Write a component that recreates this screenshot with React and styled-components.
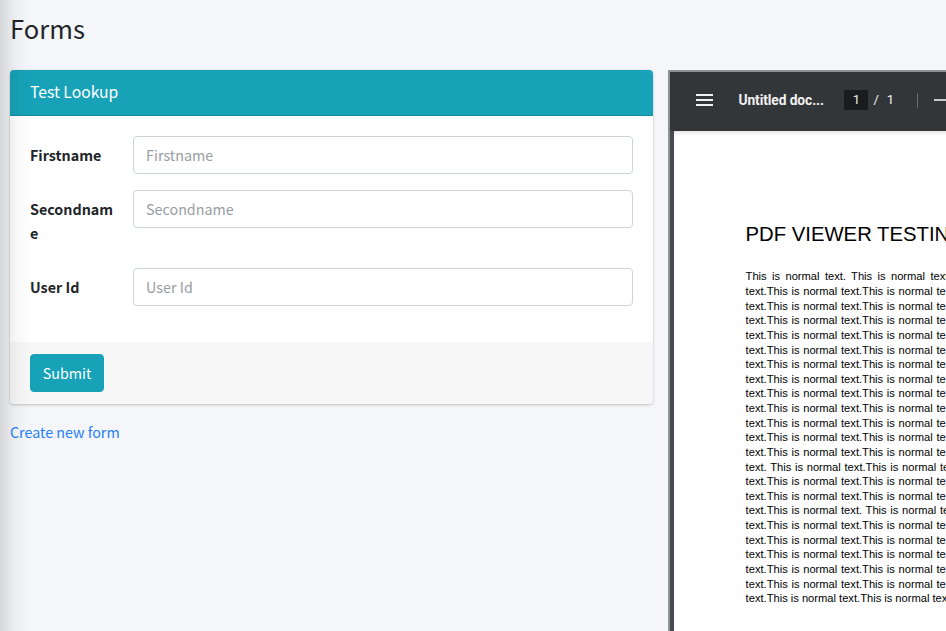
import React from "react";
import styled, { createGlobalStyle } from "styled-components";

const GlobalStyle = createGlobalStyle`
  *, *::before, *::after { box-sizing: border-box; }
  html, body { margin: 0; height: 100%; overflow: hidden; }
  body {
    background: #f4f6f9;
    color: #212529;
    font-family: "Source Sans Pro", "Noto Sans CJK SC", sans-serif;
    font-size: 14.3px;
    line-height: 24px;
  }
`;

const Page = styled.div`
  position: relative;
  width: 946px;
  height: 631px;
  overflow: hidden;
  padding: 0 0 0 10px;
`;

const SidebarShadow = styled.div`
  position: absolute;
  z-index: 5;
  top: -60px;
  bottom: -60px;
  left: -250px;
  width: 250px;
  pointer-events: none;
  box-shadow: 0 14px 28px rgba(0, 0, 0, 0.25);
`;

const PageTitle = styled.h1`
  margin: 0;
  height: 70px;
  padding-top: 11px;
  font-size: 25.6px;
  line-height: 34px;
  font-weight: 400;
`;

const Columns = styled.div`
  display: flex;
  align-items: flex-start;
  gap: 15px;
`;

const FormColumn = styled.div`
  flex: 0 0 643.3px;
`;

const Card = styled.form`
  margin: 0 0 16px;
  border-radius: 4px;
  background: #fff;
  overflow: hidden;
  box-shadow: 0 0 1px rgba(0, 0, 0, 0.125), 0 1px 3px rgba(0, 0, 0, 0.2);
`;

const CardHeader = styled.div`
  height: 46px;
  padding: 11px 20px;
  background: #17a2b8;
  border-bottom: 1px solid #148ea1;
  color: #fff;
  font-size: 15.7px;
  line-height: 21px;
`;

const CardBody = styled.div`
  padding: 20px 20px 4px;
  height: 226px;
`;

const FormRow = styled.div`
  display: flex;
  align-items: flex-start;
  margin-bottom: 16px;
`;

const Label = styled.label`
  flex: 0 0 103.1px;
  padding: 7px 18px 7px 0;
  font-weight: 700;
  overflow-wrap: anywhere;
`;

const Input = styled.input`
  flex: 1;
  min-width: 0;
  height: 38px;
  padding: 5px 12px 7px;
  border: 1px solid #ced4da;
  border-radius: 4px;
  background: #fff;
  font: inherit;
  color: #495057;
  outline: 0;
  &::placeholder { color: #979da2; opacity: 1; }
`;

const CardFooter = styled.div`
  height: 62px;
  padding: 12px 20px;
  background: #f7f7f7;
`;

const SubmitButton = styled.button`
  display: block;
  width: 74px;
  height: 38px;
  padding: 0;
  border: 1px solid #17a2b8;
  border-radius: 4px;
  background: #17a2b8;
  color: #fff;
  font: inherit;
`;

const Link = styled.a`
  display: inline-block;
  color: #2680fb;
  text-decoration: none;
`;

const Viewer = styled.div`
  flex: 0 0 400px;
  height: 600px;
  border: 2px solid;
  border-color: #8f9295 #eee #eee #8f9295;
  background: #474b4f;
  overflow: hidden;
`;

const Toolbar = styled.div`
  display: flex;
  align-items: center;
  height: 59px;
  padding: 0 0 3px 25.7px;
  background: #323639;
  color: #f1f1f1;
  font: 14px/20px Roboto, sans-serif;
`;

const MenuIcon = styled.svg`
  display: block;
  width: 18px;
  height: 14px;
  margin-right: 24.5px;
`;

const DocTitle = styled.span`
  width: 106px;
  font-size: 13.8px;
  font-weight: 700;
  letter-spacing: -0.1px;
`;

const PageField = styled.span`
  width: 24px;
  height: 20px;
  margin-right: 5px;
  background: #191b1c;
  font-size: 13px;
  text-align: center;
`;

const PageCount = styled.span`
  display: flex;
  gap: 8px;
  width: 44px;
  font-size: 13px;
`;

const Divider = styled.span`
  width: 1px;
  height: 15px;
  margin-right: 16px;
  background: #686b6e;
`;

const MinusBar = styled.span`
  width: 16px;
  height: 2px;
  background: #c8c9ca;
`;

const Sheet = styled.div`
  height: 560px;
  margin-left: 4px;
  padding: 88px 0 0 71.3px;
  background: #fff;
  box-shadow: inset 0 4px 4px -2px rgba(0, 0, 0, 0.12);
  color: #000;
  font-family: "Liberation Sans", Arial, sans-serif;
`;

const DocHeading = styled.h2`
  margin: 0 0 20.4px;
  height: 30px;
  font-size: 20.3px;
  line-height: 30px;
  font-weight: 400;
  white-space: nowrap;
`;

const Line = styled.div`
  height: 14.64px;
  font-size: 11.17px;
  line-height: 14.64px;
  white-space: nowrap;
  word-spacing: ${(p) => p.$space}px;
`;

const usual = {
  text: "text.This is normal text.This is normal text.This is normal",
  space: 0.6,
};

const lines = [
  { text: "This is normal text. This is normal text.", space: 2.25 },
  ...Array(12).fill(usual),
  { text: "text. This is normal text.This is normal text.This is", space: 0.6 },
  ...Array(2).fill(usual),
  { text: "text.This is normal text. This is normal text.This is", space: 0.6 },
  ...Array(5).fill(usual),
  { text: usual.text, space: -0.05 },
];

const fields = ["Firstname", "Secondname", "User Id"];

export default function App() {
  return (
    <Page>
      <GlobalStyle />
      <SidebarShadow />
      <PageTitle>Forms</PageTitle>
      <Columns>
        <FormColumn>
          <Card onSubmit={(e) => e.preventDefault()}>
            <CardHeader>Test Lookup</CardHeader>
            <CardBody>
              {fields.map((name) => (
                <FormRow key={name}>
                  <Label htmlFor={name}>{name}</Label>
                  <Input id={name} placeholder={name} />
                </FormRow>
              ))}
            </CardBody>
            <CardFooter>
              <SubmitButton type="submit">Submit</SubmitButton>
            </CardFooter>
          </Card>
          <Link href="#">Create new form</Link>
        </FormColumn>
        <Viewer>
          <Toolbar>
            <MenuIcon viewBox="0 0 18 14" fill="#f1f1f1">
              <path d="M0 1h17v2H0zM0 6h17v2H0zM0 11h17v2H0z" />
            </MenuIcon>
            <DocTitle>Untitled doc...</DocTitle>
            <PageField>1</PageField>
            <PageCount>
              <span>/</span>
              <span>1</span>
            </PageCount>
            <Divider />
            <MinusBar />
          </Toolbar>
          <Sheet>
            <DocHeading>PDF VIEWER TESTING</DocHeading>
            {lines.map((line, i) => (
              <Line key={i} $space={line.space}>{line.text}</Line>
            ))}
          </Sheet>
        </Viewer>
      </Columns>
    </Page>
  );
}
